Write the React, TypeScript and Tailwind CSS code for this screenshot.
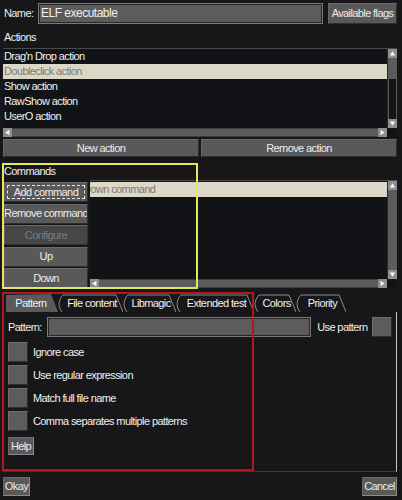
import React from "react";

type Dir = "up" | "down" | "left" | "right";

const arrowPoints: Record<Dir, string> = {
  up: "1,7 4.5,1.5 8,7",
  down: "1,2 4.5,7.5 8,2",
  left: "7,1 1.5,4.5 7,8",
  right: "2,1 7.5,4.5 2,8",
};

function Arrow({ dir }: { dir: Dir }) {
  return (
    <div className="flex h-[9px] w-[9px] shrink-0 items-center justify-center bg-[#8e8e8e]">
      <svg width="7" height="7" viewBox="0 0 9 9">
        <polygon points={arrowPoints[dir]} fill="#f5f5f5" />
      </svg>
    </div>
  );
}

// vertical scrollbar, thumb = height of the light part in px
function VScroll({ thumb }: { thumb?: number }) {
  return (
    <div className="flex w-[10px] shrink-0 flex-col border-l border-[#2a2a2a] bg-[#141417]">
      <Arrow dir="up" />
      <div className="flex min-h-0 flex-1 flex-col border-x border-[#5a5a5a]">
        {thumb ? (
          <>
            <div className="shrink-0 bg-[#5c5c5c]" style={{ height: thumb }} />
            <div className="flex-1" />
          </>
        ) : (
          <div className="flex-1 bg-[#5c5c5c]" />
        )}
      </div>
      <Arrow dir="down" />
    </div>
  );
}

function HScroll() {
  return (
    <div className="flex h-[9px] shrink-0">
      <Arrow dir="left" />
      <div className="flex-1 border-y border-[#3c3c3c] bg-[#5c5c5c]" />
      <Arrow dir="right" />
      <div className="w-[10px] shrink-0 bg-[#141417]" />
    </div>
  );
}

function Btn({
  children,
  className = "",
  disabled,
  focused,
}: {
  children: React.ReactNode;
  className?: string;
  disabled?: boolean;
  focused?: boolean;
}) {
  return (
    <div
      className={`relative flex items-center justify-center overflow-hidden whitespace-nowrap border border-[#2e2e2e] border-t-[#6a6a6a] border-l-[#666] ${
        disabled ? "bg-[#464646] text-[#7c7c7c]" : "bg-[#595959] text-[#ececec]"
      } ${className}`}
    >
      {focused && (
        <div className="pointer-events-none absolute inset-[2px] border border-dashed border-[#e8e8e8]" />
      )}
      {children}
    </div>
  );
}

function Check() {
  return (
    <div className="h-[20px] w-[20px] shrink-0 border border-[#2c2c2c] border-l-[#6e6e6e] border-t-[#6e6e6e] bg-[#5c5c5c]" />
  );
}

const tabs = [
  { label: "Pattern", w: 52, active: true },
  { label: "File content", w: 65 },
  { label: "Libmagic", w: 53 },
  { label: "Extended test", w: 78 },
  { label: "Colors", w: 42 },
  { label: "Priority", w: 50 },
];

function Tab({ label, w, active }: { label: string; w: number; active?: boolean }) {
  return (
    <div
      className="relative flex h-[18px] shrink-0 items-center justify-center"
      style={{ width: w }}
    >
      <svg className="absolute inset-0" width={w} height={18} viewBox={`0 0 ${w} 18`}>
        {active ? (
          <polygon points={`0,18 0,1 ${w - 7},0 ${w},18`} fill="#5a5a5a" />
        ) : (
          <path
            d={`M4 18 C0 13 0 6 5 1 L${w - 7} 1 L${w} 18`}
            fill="none"
            stroke="#8a8a8a"
            strokeWidth="1"
          />
        )}
      </svg>
      <span className={`relative ${active ? "pr-[2px]" : "pl-[3px]"} text-[#f0f0f0]`}>
        {label}
      </span>
    </div>
  );
}

export default function App() {
  const actions = [
    "Drag'n Drop action",
    "Doubleclick action",
    "Show action",
    "RawShow action",
    "UserO action",
  ];

  return (
    <div className="relative flex h-[500px] w-[402px] flex-col overflow-hidden bg-[#17171a] pl-[3px] pr-[5px] font-['Liberation_Sans',Arial,sans-serif] text-[11px] leading-[13px] tracking-[-0.6px] text-[#f0f0f0]">
      {/* name row */}
      <div className="mt-[3px] flex h-[21px] shrink-0 items-center">
        <span className="w-[35px] pl-[1px]">Name:</span>
        <div className="flex h-full flex-1 items-center border border-[#7a7a7a] bg-[#5c5c5c] pl-[2px] shadow-[inset_0_0_0_1px_#262626]">
          <span className="text-[12px] tracking-[-0.5px]">ELF executable</span>
        </div>
        <Btn className="ml-[5px] h-full w-[69px]">Available flags</Btn>
      </div>

      <div className="flex h-[24px] shrink-0 items-center pl-[1px] pt-[3px]">Actions</div>

      {/* actions list */}
      <div className="flex h-[89px] shrink-0 flex-col border-t border-[#4a4a4a] bg-[#121317]">
        <div className="flex min-h-0 flex-1">
          <div className="min-w-0 flex-1 overflow-hidden">
            {actions.map((a, i) => (
              <div
                key={a}
                className={`h-[15px] whitespace-nowrap pl-[1px] leading-[15px] ${
                  i === 1 ? "bg-[#dcd8c7] text-[#7a7a76]" : ""
                }`}
              >
                {a}
              </div>
            ))}
          </div>
          <VScroll thumb={21} />
        </div>
        <HScroll />
      </div>

      <div className="mt-[2px] flex h-[18px] shrink-0 gap-[2px]">
        <Btn className="flex-1">New action</Btn>
        <Btn className="flex-1">Remove action</Btn>
      </div>

      {/* commands */}
      <div className="h-[23px] shrink-0 pl-[1px] pt-[8px] leading-[12px]">Commands</div>
      <div className="flex h-[108px] shrink-0">
        <div className="ml-[1px] flex w-[84px] shrink-0 flex-col gap-[1.5px] pt-[2px]">
          <Btn className="h-[20px]" focused>
            Add command
          </Btn>
          <Btn className="h-[20px]">Remove command</Btn>
          <Btn className="h-[20px]" disabled>
            Configure
          </Btn>
          <Btn className="h-[20px]">Up</Btn>
          <Btn className="h-[20px]">Down</Btn>
        </div>
        <div className="ml-[2px] flex min-w-0 flex-1 flex-col border-t border-[#4a4a4a] bg-[#121317]">
          <div className="flex min-h-0 flex-1">
            <div className="min-w-0 flex-1 overflow-hidden pt-[1px]">
              <div className="h-[15px] whitespace-nowrap bg-[#dcd8c7] leading-[15px] text-[#7a7a76]">
                <span className="ml-[-7px]">Down command</span>
              </div>
            </div>
            <VScroll />
          </div>
          <HScroll />
        </div>
      </div>

      {/* tabs */}
      <div className="mt-[6px] flex h-[18px] shrink-0 pl-[3px]">
        {tabs.map((t) => (
          <Tab key={t.label} {...t} />
        ))}
      </div>
      <div className="flex h-[160px] shrink-0 flex-col border-b border-r border-b-[#3a3a3a] border-r-[#c8c8c8] pl-[5px] pr-[4px]">
        <div className="mt-[5px] flex h-[20px] items-center">
          <span className="w-[39px]">Pattern:</span>
          <div className="h-full w-[265px] border border-[#7a7a7a] bg-[#5c5c5c] shadow-[inset_0_0_0_1px_#262626]" />
          <span className="ml-[6px] w-[55px]">Use pattern</span>
          <Check />
        </div>
        <div className="mt-[5px] flex flex-col gap-[3px]">
          {[
            "Ignore case",
            "Use regular expression",
            "Match full file name",
            "Comma separates multiple patterns",
          ].map((l) => (
            <div key={l} className="flex h-[20px] items-center gap-[5px]">
              <Check />
              <span>{l}</span>
            </div>
          ))}
        </div>
        <Btn className="mt-[6px] h-[18px] w-[26px] border-[#8a8a8a]">Help</Btn>
      </div>

      <div className="mt-[5px] flex h-[19px] shrink-0 justify-between">
        <Btn className="w-[27px] border-[#8a8a8a]">Okay</Btn>
        <Btn className="w-[35px] border-[#8a8a8a]">Cancel</Btn>
      </div>

      {/* debug outlines drawn over the dialog */}
      <div className="pointer-events-none absolute left-[2px] top-[163px] h-[126px] w-[196px] border-2 border-[#e6e65c]" />
      <div className="pointer-events-none absolute left-[2px] top-[292px] h-[179px] w-[252px] border-2 border-[#b3161b]" />
    </div>
  );
}
